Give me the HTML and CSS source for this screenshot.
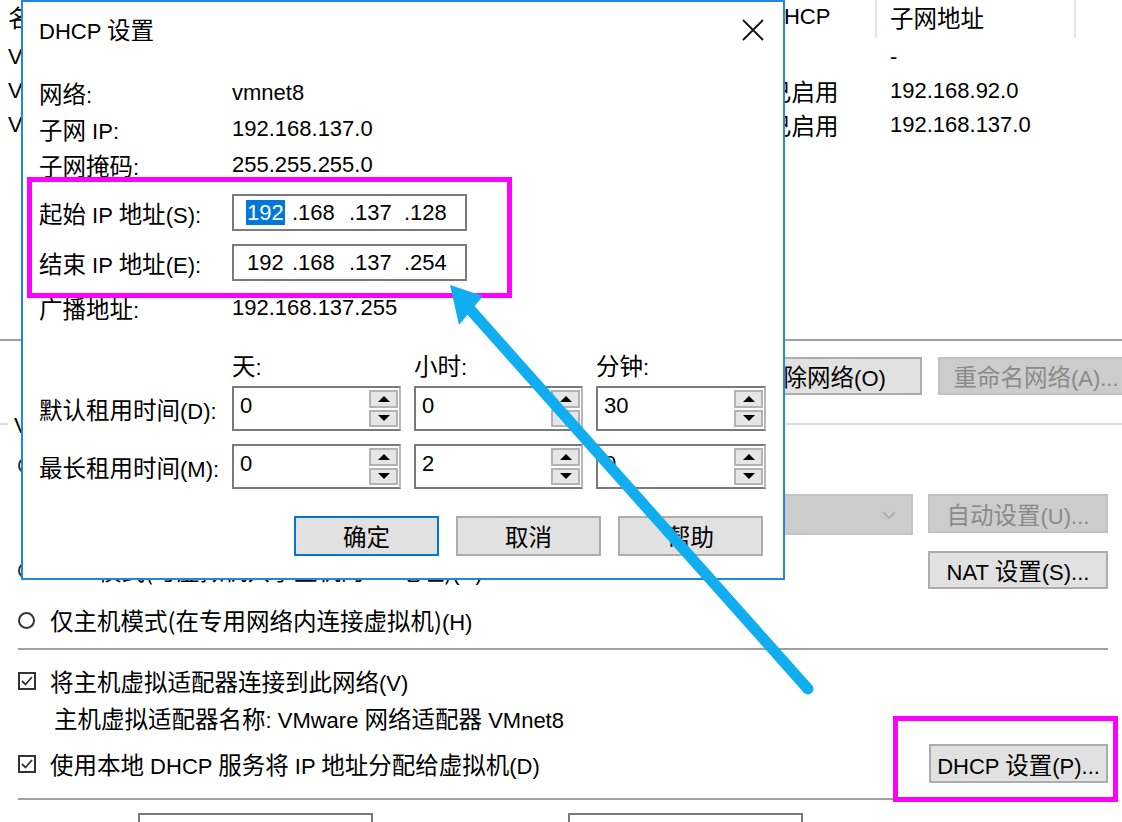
FILE: index.html
```html
<!DOCTYPE html>
<html lang="zh-CN">
<head>
    <meta charset="UTF-8">
    <title>虚拟网络编辑器 - DHCP 设置</title>
    <link rel="stylesheet" href="styles.css">
</head>
<body>
    <div class="net-list">
        <div class="list-row list-head">
            <div class="col c-name"><span class="zh">名称</span></div>
            <div class="col c-type"><span class="zh">类型</span></div>
            <div class="col c-ext"><span class="zh">外部连接</span></div>
            <div class="col c-host"><span class="zh">主机连接</span></div>
            <div class="col c-dhcp">DHCP</div>
            <div class="col c-subnet"><span class="zh">子网地址</span></div>
            <div class="col c-rest"></div>
        </div>
        <div class="list-row">
            <div class="col c-name">VMnet0</div>
            <div class="col c-type"><span class="zh">桥接模式</span></div>
            <div class="col c-ext"><span class="zh">自动桥接</span></div>
            <div class="col c-host">-</div>
            <div class="col c-dhcp">-</div>
            <div class="col c-subnet">-</div>
        </div>
        <div class="list-row">
            <div class="col c-name">VMnet1</div>
            <div class="col c-type"><span class="zh">仅主机</span>...</div>
            <div class="col c-ext">-</div>
            <div class="col c-host"><span class="zh">已连接</span></div>
            <div class="col c-dhcp"><span class="zh">已启用</span></div>
            <div class="col c-subnet">192.168.92.0</div>
        </div>
        <div class="list-row">
            <div class="col c-name">VMnet8</div>
            <div class="col c-type">NAT <span class="zh">模式</span></div>
            <div class="col c-ext">NAT <span class="zh">模式</span></div>
            <div class="col c-host"><span class="zh">已连接</span></div>
            <div class="col c-dhcp"><span class="zh">已启用</span></div>
            <div class="col c-subnet">192.168.137.0</div>
        </div>
    </div>

    <div class="list-buttons">
        <button class="btn w-add"><span class="zh">添加网络</span>(E)...</button>
        <button class="btn w-remove"><span class="zh">移除网络</span>(O)</button>
        <button class="btn w-rename" disabled><span class="zh">重命名网络</span>(A)...</button>
    </div>

    <div class="group">
        <div class="group-title">
            <span class="lead"></span>
            <span class="group-label">VMnet <span class="zh">信息</span></span>
            <span class="line"></span>
        </div>

        <div class="opt-row r-bridge">
            <span class="radio"></span>
            <span><span class="zh">桥接模式(将虚拟机直接连接到外部网络)</span>(B)</span>
        </div>

        <div class="opt-row r-bridge-to">
            <span class="bridge-label"><span class="zh">已桥接至</span>(G):</span>
            <div class="select" aria-disabled="true">
                <svg class="chevron" width="16" height="10" viewBox="0 0 16 10"><path d="M2 2 L8 8 L14 2" fill="none" stroke="#a9a9a9" stroke-width="1.6"/></svg>
            </div>
            <button class="btn w-side" disabled><span class="zh">自动设置</span>(U)...</button>
        </div>

        <div class="opt-row r-nat">
            <span class="radio"></span>
            <span>NAT <span class="zh">模式(与虚拟机共享主机的</span> IP <span class="zh">地址)</span>(N)</span>
            <button class="btn w-side push">NAT <span class="zh">设置</span>(S)...</button>
        </div>

        <div class="opt-row r-host">
            <span class="radio"></span>
            <span><span class="zh">仅主机模式(在专用网络内连接虚拟机)</span>(H)</span>
        </div>

        <div class="rule"></div>

        <div class="opt-row r-check">
            <span class="check"><svg width="14" height="14" viewBox="0 0 14 14"><path d="M2 7 L5.5 10.5 L12 3" fill="none" stroke="#333" stroke-width="1.8"/></svg></span>
            <span><span class="zh">将主机虚拟适配器连接到此网络</span>(V)</span>
        </div>

        <div class="opt-row r-adapter">
            <span><span class="zh">主机虚拟适配器名称</span>: VMware <span class="zh">网络适配器</span> VMnet8</span>
        </div>

        <div class="opt-row r-dhcp">
            <span class="check"><svg width="14" height="14" viewBox="0 0 14 14"><path d="M2 7 L5.5 10.5 L12 3" fill="none" stroke="#333" stroke-width="1.8"/></svg></span>
            <span><span class="zh">使用本地</span> DHCP <span class="zh">服务将</span> IP <span class="zh">地址分配给虚拟机</span>(D)</span>
            <button class="btn w-dhcp push">DHCP <span class="zh">设置</span>(P)...</button>
        </div>

        <div class="rule rule-low"></div>

        <div class="opt-row r-subnet">
            <span class="sub-label"><span class="zh">子网</span> IP (I):</span>
            <span class="sub-box"></span>
            <span class="sub-label mask"><span class="zh">子网掩码</span>(M):</span>
            <span class="sub-box"></span>
        </div>
    </div>

    <!-- DHCP dialog on top of the editor -->
    <div class="dialog">
        <div class="dlg-title">
            <span>DHCP <span class="zh">设置</span></span>
            <svg class="close" width="22" height="22" viewBox="0 0 22 22"><path d="M1 1 L21 21 M21 1 L1 21" stroke="#111" stroke-width="1.8"/></svg>
        </div>

        <div class="info">
            <div class="info-row"><span class="k"><span class="zh">网络</span>:</span><span>vmnet8</span></div>
            <div class="info-row"><span class="k"><span class="zh">子网</span> IP:</span><span>192.168.137.0</span></div>
            <div class="info-row"><span class="k"><span class="zh">子网掩码</span>:</span><span>255.255.255.0</span></div>
        </div>

        <div class="ip-rows">
            <div class="ip-row">
                <span class="k"><span class="zh">起始</span> IP <span class="zh">地址</span>(S):</span>
                <div class="ip-field">
                    <span class="oct o1"><span class="sel">192</span></span><span class="oct o2">.168</span><span class="oct o3">.137</span><span class="oct">.128</span>
                </div>
            </div>
            <div class="ip-row">
                <span class="k"><span class="zh">结束</span> IP <span class="zh">地址</span>(E):</span>
                <div class="ip-field">
                    <span class="oct o1">192</span><span class="oct o2">.168</span><span class="oct o3">.137</span><span class="oct">.254</span>
                </div>
            </div>
        </div>

        <div class="info info-low">
            <div class="info-row"><span class="k"><span class="zh">广播地址</span>:</span><span>192.168.137.255</span></div>
        </div>

        <div class="lease-head">
            <span class="unit"><span class="zh">天</span>:</span>
            <span class="unit"><span class="zh">小时</span>:</span>
            <span class="unit"><span class="zh">分钟</span>:</span>
        </div>

        <div class="lease">
            <span class="k"><span class="zh">默认租用时间</span>(D):</span>
            <div class="spin"><span class="spin-val">0</span><span class="spin-btns"><i class="up"></i><i class="down"></i></span></div>
            <div class="spin"><span class="spin-val">0</span><span class="spin-btns"><i class="up"></i><i class="down"></i></span></div>
            <div class="spin"><span class="spin-val">30</span><span class="spin-btns"><i class="up"></i><i class="down"></i></span></div>

            <span class="k"><span class="zh">最长租用时间</span>(M):</span>
            <div class="spin"><span class="spin-val">0</span><span class="spin-btns"><i class="up"></i><i class="down"></i></span></div>
            <div class="spin"><span class="spin-val">2</span><span class="spin-btns"><i class="up"></i><i class="down"></i></span></div>
            <div class="spin"><span class="spin-val">0</span><span class="spin-btns"><i class="up"></i><i class="down"></i></span></div>
        </div>

        <div class="dlg-buttons">
            <button class="btn dlg-btn default"><span class="zh">确定</span></button>
            <button class="btn dlg-btn"><span class="zh">取消</span></button>
            <button class="btn dlg-btn"><span class="zh">帮助</span></button>
        </div>
    </div>

    <!-- annotations -->
    <div class="mark mark-ip"></div>
    <div class="mark mark-dhcp"></div>
    <svg class="arrow" width="1122" height="822" viewBox="0 0 1122 822">
        <line x1="808" y1="689" x2="468" y2="307" stroke="#10adf0" stroke-width="11" stroke-linecap="round"/>
        <polygon points="450,285 483,296 459,325" fill="#10adf0"/>
    </svg>
</body>
</html>
```

FILE: styles.css
```css
* {
    box-sizing: border-box;
}
html, body {
    margin: 0;
}
body {
    position: relative;
    width: 1122px;
    height: 822px;
    overflow: hidden;
    background: #fff;
    color: #000;
    font-family: "Liberation Sans", "Noto Sans CJK SC", sans-serif;
    font-size: 22px;
}
.zh {
    font-family: "Noto Sans CJK SC", sans-serif;
    font-size: 23.5px;
}
button {
    font: inherit;
    color: inherit;
}

/* network list */
.net-list {
    height: 341px;
    border-bottom: 2px solid #a0a0a0;
}
.list-row {
    display: flex;
    height: 34px;
    line-height: 34px;
    white-space: nowrap;
}
.list-head {
    height: 38px;
    margin-bottom: 2px;
}
.list-head .col {
    border-right: 2px solid #e5e5e5;
}
.list-head .c-rest {
    border-right: none;
}
.col {
    overflow: hidden;
    padding-left: 13px;
    flex: none;
}
.c-name { width: 200px; padding-left: 8px; }
.c-type { width: 190px; }
.c-ext { width: 190px; }
.c-host { width: 175px; }
.c-dhcp { width: 122px; }
.c-subnet { width: 199px; }
.c-rest { flex: 1; }

.list-buttons {
    display: flex;
    gap: 16px;
    margin-top: 16px;
    padding-left: 510px;
    height: 38px;
}
.btn {
    flex: none;
    height: 38px;
    padding: 0;
    border: 2px solid #adadad;
    background: #e1e1e1;
    white-space: nowrap;
    overflow: hidden;
}
.btn:disabled {
    color: #8a8a8a;
    background: #cccccc;
    border-color: #c2c2c2;
}
.w-add { width: 198px; }
.w-remove { width: 198px; }
.w-rename { width: 196px; }
.w-side { width: 180px; }
.w-dhcp { width: 179px; height: 39px; }
.push {
    margin-left: auto;
}

/* VMnet info group */
.group-title {
    display: flex;
    align-items: center;
    height: 34px;
    margin-top: 12px;
}
.group-title .lead {
    width: 8px;
    height: 2px;
    background: #dcdcdc;
}
.group-label {
    padding: 0 6px;
    line-height: 34px;
}
.group-title .line {
    flex: 1;
    height: 2px;
    background: #dcdcdc;
}
.opt-row {
    display: flex;
    align-items: center;
    padding-left: 18px;
    padding-right: 14px;
    height: 34px;
    white-space: nowrap;
}
.radio {
    flex: none;
    width: 17px;
    height: 17px;
    border: 2px solid #333;
    border-radius: 50%;
    margin-right: 15px;
}
.check {
    flex: none;
    display: flex;
    align-items: center;
    justify-content: center;
    width: 18px;
    height: 18px;
    border: 2px solid #333;
    margin-right: 14px;
}
.r-bridge { margin-top: 7px; }
.r-bridge-to {
    margin-top: 12px;
    height: 41px;
    padding-left: 50px;
}
.select {
    flex: 1;
    height: 41px;
    margin-left: 20px;
    margin-right: 15px;
    background: #cccccc;
    border: 2px solid #c4c4c4;
    display: flex;
    align-items: center;
    justify-content: flex-end;
    padding-right: 14px;
}
.r-bridge-to .btn {
    height: 39px;
    align-self: flex-start;
}
.r-nat {
    margin-top: 16px;
    height: 38px;
}
.r-host { margin-top: 14px; }
.rule {
    height: 2px;
    margin: 11px 14px 0 18px;
    background: #a0a0a0;
}
.r-check { margin-top: 14px; }
.r-adapter {
    margin-top: 3px;
    padding-left: 54px;
}
.r-dhcp {
    margin-top: 9px;
    height: 39px;
}
.rule-low {
    margin-top: 15px;
}
.r-subnet {
    margin-top: 13px;
    height: 40px;
    align-items: flex-start;
    padding-left: 40px;
}
.sub-label {
    width: 98px;
    line-height: 40px;
}
.sub-label.mask {
    width: 135px;
    margin-left: 60px;
}
.sub-box {
    width: 235px;
    height: 40px;
    border: 2px solid #7a7a7a;
}

/* DHCP dialog */
.dialog {
    position: absolute;
    left: 21px;
    top: 0;
    width: 764px;
    height: 580px;
    background: #fff;
    border: 2px solid #2186dd;
}
.dlg-title {
    display: flex;
    align-items: center;
    justify-content: space-between;
    height: 58px;
    padding-left: 16px;
    padding-right: 19px;
}
.dlg-title > span {
    margin-top: -4px;
}
.close {
    margin-top: -3px;
}
.info {
    margin-top: 15px;
    padding-left: 16px;
}
.info-row,
.ip-row {
    display: flex;
    align-items: center;
    height: 36px;
    white-space: nowrap;
}
.k {
    width: 193px;
    flex: none;
}
.ip-rows {
    margin-top: 11px;
    padding-left: 16px;
    display: flex;
    flex-direction: column;
    gap: 13px;
}
.ip-row {
    height: 37px;
}
.ip-field {
    width: 235px;
    height: 37px;
    border: 2px solid #7a7a7a;
    padding-left: 13px;
    display: flex;
    align-items: center;
    white-space: nowrap;
}
.oct {
    display: inline-block;
}
.o1 { width: 45px; }
.o2 { width: 57px; }
.o3 { width: 55px; }
.sel {
    display: inline-block;
    background: #0078d7;
    color: #fff;
    line-height: 25px;
    padding: 0 1px;
    margin-left: -1px;
}
.info-low {
    margin-top: 9px;
}
.lease-head {
    display: flex;
    height: 36px;
    margin-top: 21px;
    padding-left: 209px;
    line-height: 36px;
}
.unit {
    width: 182px;
    flex: none;
}
.lease {
    display: grid;
    grid-template-columns: 180px 169px 169px 170px;
    grid-auto-rows: 45px;
    column-gap: 13px;
    row-gap: 13px;
    align-items: center;
    margin-top: 3px;
    padding-left: 16px;
    white-space: nowrap;
}
.lease .k {
    width: auto;
}
.spin {
    display: flex;
    height: 45px;
    border: 2px solid #7a7a7a;
    border-right-color: #b8b8b8;
}
.spin-val {
    flex: 1;
    padding-left: 6px;
    line-height: 36px;
}
.spin-btns {
    display: flex;
    flex-direction: column;
    gap: 2px;
    padding: 2px 1px 2px 0;
}
.spin-btns i {
    width: 29px;
    height: 18px;
    background: #e6e6e6;
    border: 2px solid #b3b3b3;
    display: flex;
    align-items: center;
    justify-content: center;
}
.spin-btns i::before {
    content: "";
    width: 0;
    height: 0;
    border-left: 6px solid transparent;
    border-right: 6px solid transparent;
}
.spin-btns .up::before {
    border-bottom: 6px solid #000;
}
.spin-btns .down::before {
    border-top: 6px solid #000;
}
.dlg-buttons {
    display: flex;
    justify-content: flex-end;
    gap: 17px;
    margin-top: 27px;
    padding-right: 20px;
}
.dlg-btn {
    width: 145px;
    height: 40px;
}
.dlg-btn.default {
    border-color: #0078d7;
}

/* annotations */
.mark {
    position: absolute;
    border: 5px solid #ff00ff;
}
.mark-ip {
    left: 27px;
    top: 177px;
    width: 485px;
    height: 121px;
}
.mark-dhcp {
    left: 893px;
    top: 716px;
    width: 225px;
    height: 86px;
}
.arrow {
    position: absolute;
    left: 0;
    top: 0;
    pointer-events: none;
}
```
